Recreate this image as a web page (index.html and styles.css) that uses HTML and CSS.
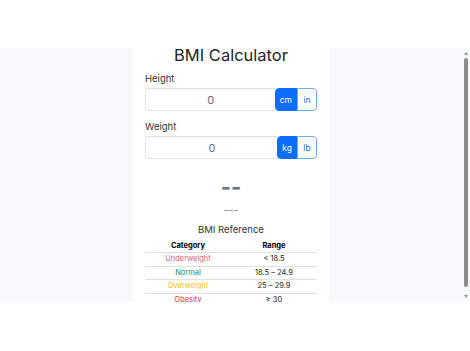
FILE: index.html
```html
<!DOCTYPE html>
<html lang="en">
  <head>
    <meta charset="UTF-8" />
    <meta name="viewport" content="width=device-width, initial-scale=1.0" />
    <title>BMI Calculator</title>
    <link rel="stylesheet" href="styles.css">
  </head>
  <body>
    <div class="frame">
      <div class="frame-content">
        <div class="calc-card">
          <h1 class="title">BMI Calculator</h1>

          <label class="field-label" for="height">Height</label>
          <div class="input-group">
            <input type="text" id="height" value="0" />
            <button type="button" class="unit active">cm</button>
            <button type="button" class="unit">in</button>
          </div>

          <label class="field-label" for="weight">Weight</label>
          <div class="input-group">
            <input type="text" id="weight" value="0" />
            <button type="button" class="unit active">kg</button>
            <button type="button" class="unit">lb</button>
          </div>

          <div class="result">--</div>
          <div class="result-cat">---</div>

          <h2 class="ref-title">BMI Reference</h2>
          <table class="ref-table">
            <thead>
              <tr><th>Category</th><th>Range</th></tr>
            </thead>
            <tbody>
              <tr><td class="under">Underweight</td><td>&lt; 18.5</td></tr>
              <tr><td class="normal">Normal</td><td>18.5 – 24.9</td></tr>
              <tr><td class="over">Overweight</td><td>25 – 29.9</td></tr>
              <tr><td class="obese">Obesity</td><td>≥ 30</td></tr>
            </tbody>
          </table>
        </div>
      </div>

      <!-- scrollbar drawn by hand, the browser hides its own -->
      <div class="scrollbar">
        <span class="arrow">▲</span>
        <div class="thumb"></div>
        <span class="arrow">▼</span>
      </div>
    </div>
  </body>
</html>
```

FILE: styles.css
```css
body {
  margin: 0;
  padding: 0;
  background-color: #ffffff;
  font-family: Inter, "Noto Sans", sans-serif;
  color: #212529;
}

.frame {
  margin-top: 48px;
  height: 254px;
  display: flex;
  background-color: #f8f9fa;
}

.frame-content {
  flex: 1;
  min-height: 0;
  clip-path: inset(-12px 0 0 0); /* only cut the bottom */
}

.scrollbar {
  width: 8px;
  display: flex;
  flex-direction: column;
  align-items: center;
  padding: 2px 0 2px;
  box-sizing: border-box;
}

.arrow {
  font-size: 4px;
  line-height: 7px;
  color: #8c8c8c;
}

.thumb {
  width: 4px;
  flex: 1;
  margin: 1px 0 6px;
  border-radius: 2px;
  background-color: #8c8c8c;
}

.calc-card {
  width: 172px;
  margin: 0 auto;
  padding: 0 12px 12px;
  background-color: #ffffff;
  display: flex;
  flex-direction: column;
}

.title {
  margin: 0;
  font-size: 16.5px;
  line-height: 14px;
  font-weight: 400;
  text-align: center;
}

.field-label {
  margin-top: 10px;
  margin-bottom: 3px;
  font-size: 9.5px;
  line-height: 13px;
  color: #333;
}

.input-group {
  display: flex;
  height: 23px;
  margin-bottom: -1px;
}

.input-group input {
  flex: 1;
  min-width: 0;
  box-sizing: border-box;
  border: 1px solid #dee2e6;
  border-right: none;
  border-radius: 4px 0 0 4px;
  padding: 0;
  font-family: Inter, sans-serif;
  font-size: 11px;
  color: #6c6c6c;
  text-align: center;
}

.unit {
  box-sizing: border-box;
  padding: 0 4px;
  min-width: 20px;
  border: 1px solid #6ea8fe;
  background-color: #ffffff;
  color: #0d6efd;
  font-family: Inter, sans-serif;
  font-size: 8.5px;
}

.unit:last-child {
  border-radius: 0 4px 4px 0;
}

.unit.active {
  background-color: #0d6efd;
  border-color: #0d6efd;
  color: #ffffff;
  border-radius: 4px 0 0 4px;
  margin-left: -1px;
}

.result {
  margin-top: 17px;
  font-size: 22px;
  line-height: 24px;
  font-weight: 700;
  text-align: center;
  color: #6c757d;
}

.result-cat {
  margin-top: 4px;
  font-size: 11px;
  line-height: 14px;
  text-align: center;
  color: #8a8f94;
}

.ref-title {
  margin: 6px 0 2px;
  font-size: 9.5px;
  line-height: 14px;
  font-weight: 400;
  text-align: center;
  color: #333;
}

.ref-table {
  width: 100%;
  border-collapse: collapse;
  font-size: 7.5px;
}

.ref-table th,
.ref-table td {
  width: 50%;
  padding: 0;
  text-align: center;
  border-bottom: 1px solid #dee2e6;
}

.ref-table th {
  line-height: 13px;
  font-weight: 700;
  color: #000;
}

.ref-table td {
  line-height: 12.6px;
  color: #212529;
}

.under { color: #e35d6a !important; }
.normal { color: #2a8a5a !important; }
.over { color: #ffc107 !important; }
.obese { color: #dc3545 !important; }
```
